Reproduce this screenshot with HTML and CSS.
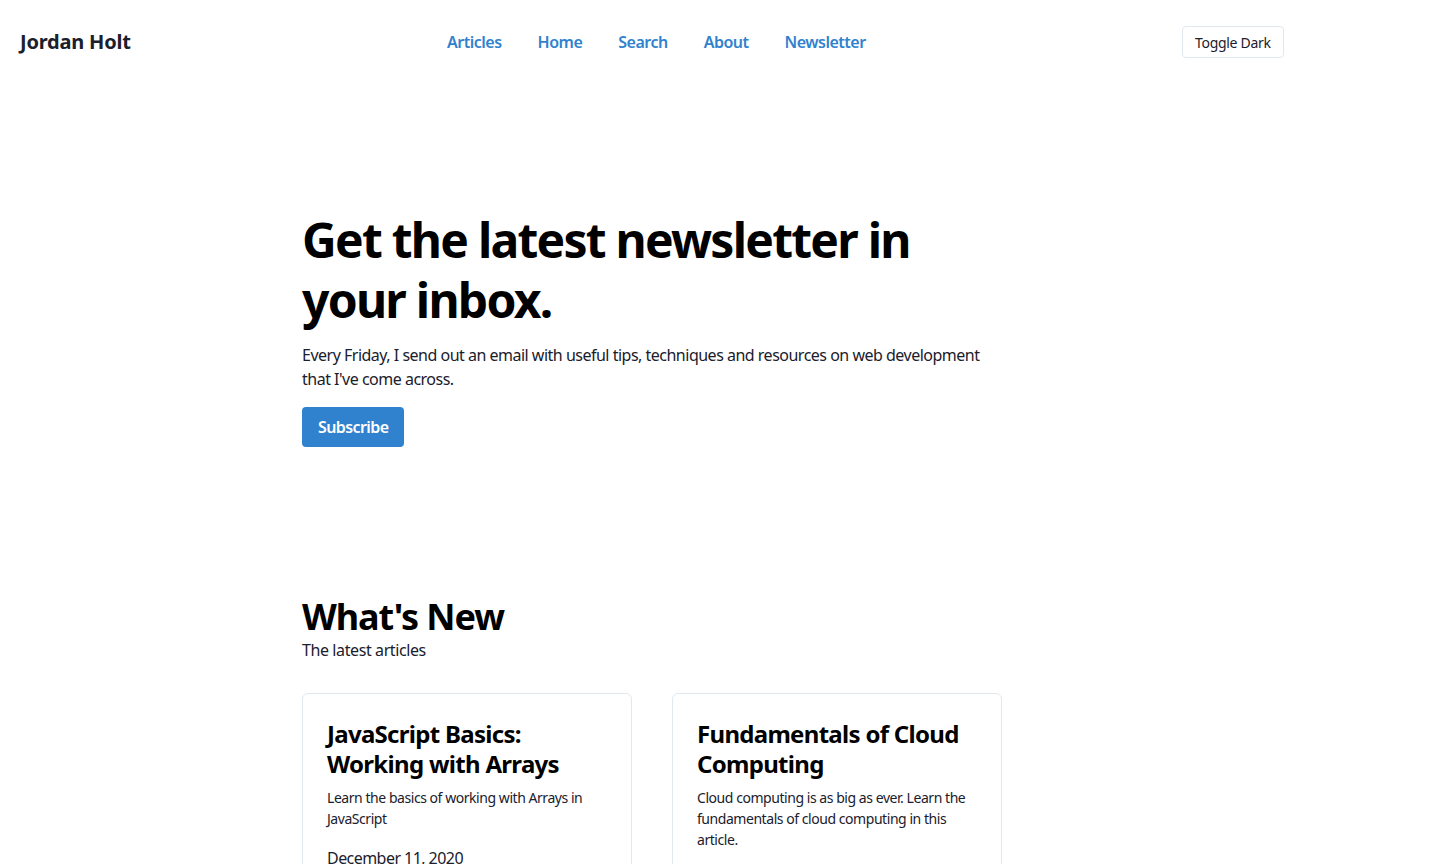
FILE: index.html
```html
<!DOCTYPE html>
<html lang="en">
<head>
<meta charset="utf-8">
<title>Jordan Holt</title>
<link rel="stylesheet" href="styles.css">
</head>
<body>
<header class="site-header">
  <a class="brand" href="#">Jordan Holt</a>
  <nav class="main-nav">
    <a href="#">Articles</a>
    <a href="#">Home</a>
    <a href="#">Search</a>
    <a href="#">About</a>
    <a href="#">Newsletter</a>
  </nav>
  <div class="header-actions">
    <button class="toggle-btn" type="button">Toggle Dark</button>
  </div>
</header>
<main class="content">
  <section class="hero">
    <h1 class="hero-title">Get the latest newsletter in your inbox.</h1>
    <p class="hero-text">Every Friday, I send out an email with useful tips, techniques and resources on web development that I've come across.</p>
    <button class="subscribe-btn" type="button">Subscribe</button>
  </section>
  <section class="news">
    <h2 class="news-title">What's New</h2>
    <p class="news-sub">The latest articles</p>
    <div class="cards">
      <article class="card">
        <h3 class="card-title">JavaScript Basics: Working with Arrays</h3>
        <p class="card-desc">Learn the basics of working with Arrays in JavaScript</p>
        <p class="card-date">December 11, 2020</p>
      </article>
      <article class="card">
        <h3 class="card-title">Fundamentals of Cloud Computing</h3>
        <p class="card-desc">Cloud computing is as big as ever. Learn the fundamentals of cloud computing in this article.</p>
        <p class="card-date">December 4, 2020</p>
      </article>
    </div>
  </section>
</main>
</body>
</html>
```
FILE: styles.css
```css
* { box-sizing: border-box; }
html, body { margin: 0; padding: 0; }
body {
  font-family: "Noto Sans", "Open Sans", sans-serif;
  color: #1a202c;
  background: #fff;
  font-size: 16px;
  line-height: 1.5;
}
.site-header {
  display: flex;
  align-items: center;
  justify-content: space-between;
  height: 84px;
  padding: 0 20px;
}
.brand {
  font-size: 20px;
  font-weight: 700;
  color: #1a202c;
  text-decoration: none;
  letter-spacing: -0.2px;
}
.main-nav {
  display: flex;
  gap: 36px;
}
.main-nav a {
  color: #3182ce;
  font-weight: 600;
  text-decoration: none;
  font-size: 16px;
  letter-spacing: -0.5px;
}
.header-actions {
  width: 231px;
  display: flex;
}
.toggle-btn {
  font-family: inherit;
  font-size: 14px;
  color: #1a202c;
  background: #fff;
  border: 1px solid #e2e8f0;
  border-radius: 4px;
  height: 32px;
  padding: 0 12px;
  letter-spacing: -0.3px;
}
.content {
  width: 700px;
  margin-left: 302px;
}
.hero {
  padding-top: 126px;
}
.hero-title {
  margin: 0;
  font-size: 48px;
  line-height: 60px;
  font-weight: 700;
  color: #000;
  letter-spacing: -1.75px;
}
.hero-text {
  margin: 13px 0 16px;
  line-height: 24px;
  letter-spacing: -0.5px;
}
.subscribe-btn {
  font-family: inherit;
  font-size: 16px;
  font-weight: 600;
  color: #fff;
  background: #3182ce;
  border: none;
  border-radius: 4px;
  height: 40px;
  padding: 0 16px;
  letter-spacing: -0.6px;
}
.news {
  padding-top: 148px;
}
.news-title {
  margin: 0;
  font-size: 36px;
  line-height: 43px;
  font-weight: 700;
  color: #000;
  letter-spacing: -1.1px;
}
.news-sub {
  margin: 0;
  line-height: 24px;
  letter-spacing: -0.4px;
}
.cards {
  display: grid;
  grid-template-columns: 1fr 1fr;
  gap: 40px;
  margin-top: 31px;
}
.card {
  border: 1px solid #e2e8f0;
  border-radius: 6px;
  padding: 25px 24px 24px;
}
.card-title {
  margin: 0 0 8px;
  font-size: 24px;
  line-height: 30px;
  font-weight: 700;
  color: #000;
  letter-spacing: -0.7px;
}
.card-desc {
  margin: 0;
  font-size: 14px;
  line-height: 21px;
  letter-spacing: -0.45px;
}
.card-date {
  margin: 17px 0 0;
  line-height: 24px;
  letter-spacing: -0.55px;
}
```
